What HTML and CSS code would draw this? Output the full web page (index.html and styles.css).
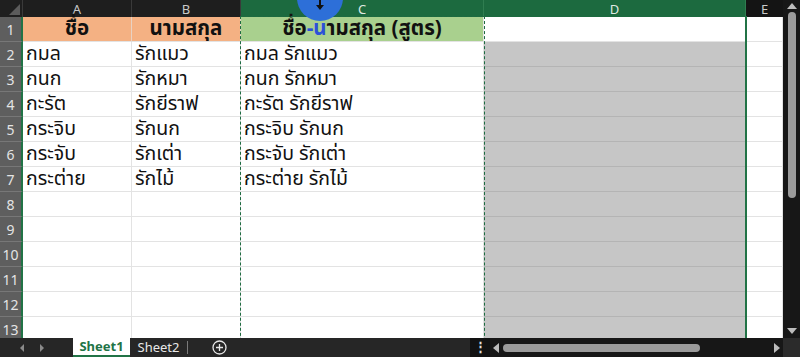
FILE: index.html
```html
<!DOCTYPE html>
<html lang="th">
<head>
  <meta charset="UTF-8">
  <meta name="viewport" content="width=device-width, initial-scale=1.0">
  <title>Sheet1 - Excel</title>
  <link rel="stylesheet" href="styles.css">
</head>
<body>
  <div class="workbook">
    <div class="sheet-area">
      <div class="grid">
        <!-- column headers -->
        <div class="corner"><span class="corner-tri"></span></div>
        <div class="col-head">A</div>
        <div class="col-head">B</div>
        <div class="col-head col-sel">C</div>
        <div class="col-head col-sel">D</div>
        <div class="col-head col-e">E</div>

        <!-- row 1 -->
        <div class="row-head">1</div>
        <div class="cell head-orange">ชื่อ</div>
        <div class="cell head-orange">นามสกุล</div>
        <div class="cell head-green">ชื่อ<span class="hl">-น</span>ามสกุล (สูตร)</div>
        <div class="cell cell-active"></div>
        <div class="cell"></div>

        <div class="row-head">2</div>
        <div class="cell">กมล</div>
        <div class="cell">รักแมว</div>
        <div class="cell">กมล รักแมว</div>
        <div class="cell cell-sel"></div>
        <div class="cell"></div>

        <div class="row-head">3</div>
        <div class="cell">กนก</div>
        <div class="cell">รักหมา</div>
        <div class="cell">กนก รักหมา</div>
        <div class="cell cell-sel"></div>
        <div class="cell"></div>

        <div class="row-head">4</div>
        <div class="cell">กะรัต</div>
        <div class="cell">รักยีราฟ</div>
        <div class="cell">กะรัต รักยีราฟ</div>
        <div class="cell cell-sel"></div>
        <div class="cell"></div>

        <div class="row-head">5</div>
        <div class="cell">กระจิบ</div>
        <div class="cell">รักนก</div>
        <div class="cell">กระจิบ รักนก</div>
        <div class="cell cell-sel"></div>
        <div class="cell"></div>

        <div class="row-head">6</div>
        <div class="cell">กระจับ</div>
        <div class="cell">รักเต่า</div>
        <div class="cell">กระจับ รักเต่า</div>
        <div class="cell cell-sel"></div>
        <div class="cell"></div>

        <div class="row-head">7</div>
        <div class="cell">กระต่าย</div>
        <div class="cell">รักไม้</div>
        <div class="cell">กระต่าย รักไม้</div>
        <div class="cell cell-sel"></div>
        <div class="cell"></div>

        <div class="row-head">8</div>
        <div class="cell"></div><div class="cell"></div><div class="cell"></div>
        <div class="cell cell-sel"></div><div class="cell"></div>

        <div class="row-head">9</div>
        <div class="cell"></div><div class="cell"></div><div class="cell"></div>
        <div class="cell cell-sel"></div><div class="cell"></div>

        <div class="row-head">10</div>
        <div class="cell"></div><div class="cell"></div><div class="cell"></div>
        <div class="cell cell-sel"></div><div class="cell"></div>

        <div class="row-head">11</div>
        <div class="cell"></div><div class="cell"></div><div class="cell"></div>
        <div class="cell cell-sel"></div><div class="cell"></div>

        <div class="row-head">12</div>
        <div class="cell"></div><div class="cell"></div><div class="cell"></div>
        <div class="cell cell-sel"></div><div class="cell"></div>

        <div class="row-head">13</div>
        <div class="cell"></div><div class="cell"></div><div class="cell"></div>
        <div class="cell cell-sel"></div><div class="cell"></div>

        <!-- overlays -->
        <div class="marquee"></div>
        <div class="sel-edge"></div>
        <div class="click-dot">
          <svg class="click-cursor" width="8" height="11" viewBox="0 0 8 11">
            <path d="M3 0h2v6h3l-4 5-4-5h3z" fill="#111"/>
          </svg>
        </div>
      </div>

      <div class="vscroll">
        <span class="tri tri-up"></span>
        <div class="vthumb"></div>
        <span class="tri tri-down"></span>
      </div>
    </div>

    <div class="tabbar">
      <div class="tab-nav">
        <span class="tri tri-left small"></span>
        <span class="tri tri-right small"></span>
      </div>
      <div class="tab tab-active">Sheet1</div>
      <div class="tab">Sheet2</div>
      <div class="tab-sep"></div>
      <div class="tab-add">
        <svg width="15" height="15" viewBox="0 0 15 15">
          <circle cx="7.5" cy="7.5" r="6.5" fill="none" stroke="#e6e6e6" stroke-width="1.3"/>
          <path d="M7.5 4v7M4 7.5h7" stroke="#e6e6e6" stroke-width="1.3"/>
        </svg>
      </div>
      <div class="tab-fill"></div>
      <div class="split-handle">⋮</div>
      <div class="hscroll">
        <span class="tri tri-left"></span>
        <div class="hthumb"></div>
        <span class="tri tri-right"></span>
      </div>
      <div class="scroll-corner"></div>
    </div>
  </div>
</body>
</html>
```

FILE: styles.css
```css
* {
  margin: 0;
  padding: 0;
  box-sizing: border-box;
}
body {
  width: 800px;
  height: 357px;
  overflow: hidden;
  background: #262626;
  font-family: "Noto Sans Thai", "Leelawadee UI", Tahoma, "Noto Sans", sans-serif;
}
.workbook {
  display: flex;
  flex-direction: column;
  height: 357px;
}
.sheet-area {
  display: flex;
  height: 338px;
  overflow: hidden;
}
.grid {
  position: relative;
  width: 783px;
  display: grid;
  grid-template-columns: 23px 109px 109px 243px 262px 37px;
  grid-template-rows: 17px repeat(13, 25px);
  background: #fff;
}

/* headers */
.corner {
  position: relative;
  background: #1f1f1f;
  border-right: 1px solid #3a3a3a;
}
.corner-tri {
  position: absolute;
  right: 2px;
  bottom: 2px;
  border-left: 11px solid transparent;
  border-bottom: 11px solid #5c5c5c;
}
.col-head {
  display: flex;
  align-items: center;
  justify-content: center;
  background: #1e1e1e;
  color: #c9c9c9;
  font-family: "Segoe UI", "Noto Sans", sans-serif;
  font-size: 13px;
  line-height: 16px;
  border-right: 1px solid #3a3a3a;
}
.col-sel {
  background: #1c6a3f;
  color: #dfe9e2;
  border-right: 1px solid #2f7d50;
}
.col-e {
  background: #141414;
  border-right: none;
}
.row-head {
  display: flex;
  align-items: flex-end;
  justify-content: center;
  padding-bottom: 2px;
  background: #5e5e5e;
  color: #e4e4e4;
  font-family: "Segoe UI", "Noto Sans", sans-serif;
  font-size: 14px;
  line-height: 18px;
  border-bottom: 1px solid #777;
  border-right: 2px solid #217346;
}

/* cells */
.cell {
  display: flex;
  align-items: center;
  padding-left: 3px;
  font-size: 19.5px;
  line-height: 24px;
  color: #111;
  white-space: nowrap;
  border-right: 1px solid #e3e3e3;
  border-bottom: 1px solid #e3e3e3;
}
.head-orange,
.head-green {
  justify-content: center;
  font-size: 20.5px;
  font-weight: 700;
  padding-left: 0;
}
.head-orange {
  background: #f4b183;
  border-right-color: #e8d2c2;
}
.head-green {
  background: #a9d08e;
}
.hl {
  color: #2b50d8;
}
.cell-active {
  background: #fff;
}
.cell-sel {
  background: #c6c6c6;
  border-bottom-color: #b4b4b4;
  border-right-color: #c6c6c6;
}

/* overlays */
.marquee {
  position: absolute;
  left: 240px;
  top: 16px;
  width: 245px;
  height: 340px;
  border: 1px dashed #1e6b41;
  pointer-events: none;
}
.sel-edge {
  position: absolute;
  left: 745px;
  top: 16px;
  width: 2px;
  height: 330px;
  background: #217346;
}
.click-dot {
  position: absolute;
  left: 297px;
  top: -25px;
  width: 46px;
  height: 46px;
  border-radius: 50%;
  background: #2d6fd8;
  display: flex;
  align-items: flex-end;
  justify-content: center;
  padding-bottom: 11px;
}
.click-cursor {
  display: block;
}

/* vertical scrollbar */
.vscroll {
  width: 17px;
  display: flex;
  flex-direction: column;
  align-items: center;
  background: #171717;
  padding-top: 3px;
}
.vthumb {
  width: 8px;
  height: 186px;
  margin-top: 3px;
  border-radius: 4px;
  background: #9b9b9b;
}
.tri {
  display: block;
  width: 0;
  height: 0;
}
.tri-up {
  border-left: 5px solid transparent;
  border-right: 5px solid transparent;
  border-bottom: 6px solid #bdbdbd;
}
.tri-down {
  margin-top: auto;
  margin-bottom: 4px;
  border-left: 5px solid transparent;
  border-right: 5px solid transparent;
  border-top: 6px solid #bdbdbd;
}
.tri-left {
  border-top: 5px solid transparent;
  border-bottom: 5px solid transparent;
  border-right: 6px solid #bdbdbd;
}
.tri-right {
  border-top: 5px solid transparent;
  border-bottom: 5px solid transparent;
  border-left: 6px solid #bdbdbd;
}
.tri.small {
  border-top-width: 4px;
  border-bottom-width: 4px;
}
.tri-left.small {
  border-right: 4px solid #8a8a8a;
}
.tri-right.small {
  border-left: 4px solid #8a8a8a;
}

/* sheet tabs */
.tabbar {
  display: flex;
  height: 19px;
  background: #262626;
  align-items: stretch;
}
.tab-nav {
  width: 73px;
  display: flex;
  align-items: center;
  gap: 16px;
  padding-left: 20px;
}
.tab {
  display: flex;
  align-items: center;
  justify-content: center;
  width: 57px;
  color: #e8e8e8;
  font-family: "Segoe UI", "Noto Sans", sans-serif;
  font-size: 13px;
  line-height: 17px;
}
.tab-active {
  background: #fff;
  color: #217346;
  font-weight: 700;
  border-bottom: 2px solid #217346;
}
.tab-sep {
  width: 1px;
  margin: 3px 0;
  background: #7a7a7a;
}
.tab-add {
  display: flex;
  align-items: center;
  padding-left: 24px;
}
.tab-fill {
  flex: 1;
}
.split-handle {
  width: 20px;
  display: flex;
  align-items: center;
  justify-content: center;
  background: #121212;
  color: #e0e0e0;
  font-size: 13px;
  line-height: 17px;
  font-weight: 700;
}
.hscroll {
  width: 293px;
  display: flex;
  align-items: center;
  gap: 4px;
  padding: 0 3px;
  background: #171717;
}
.hthumb {
  width: 197px;
  height: 8px;
  border-radius: 4px;
  background: #9b9b9b;
}
.hscroll .tri-right {
  margin-left: auto;
}
.scroll-corner {
  width: 17px;
  background: #2b2b2b;
}
```
